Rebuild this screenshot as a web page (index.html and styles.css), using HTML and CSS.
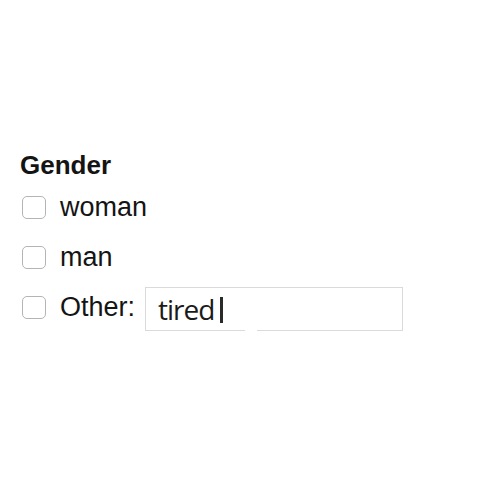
FILE: index.html
```html
<!DOCTYPE html>
<html lang="en">
  <head>
    <meta charset="UTF-8" />
    <title>Gender</title>
    <link rel="stylesheet" href="styles.css">
  </head>
  <body>
    <form class="form">
      <h2 class="legend">Gender</h2>
      <label class="row">
        <input type="checkbox" class="check" />
        <span>woman</span>
      </label>
      <label class="row">
        <input type="checkbox" class="check" />
        <span>man</span>
      </label>
      <div class="row">
        <input type="checkbox" class="check" id="other" />
        <label for="other">Other:</label>
        <div class="field">tired<span class="caret"></span></div>
      </div>
    </form>
  </body>
</html>
```

FILE: styles.css
```css
body {
  margin: 0;
  padding: 0;
  background: #fff;
  font-family: "Liberation Sans", Arial, sans-serif;
  color: #141414;
}

.form {
  padding: 150px 20px 0;
}

.legend {
  margin: 0 0 2px 0;
  font-size: 26px;
  line-height: 30px;
  font-weight: bold;
}

.row {
  display: flex;
  align-items: center;
  height: 50px;
  font-size: 27px;
}

.check {
  appearance: none;
  -webkit-appearance: none;
  width: 24px;
  height: 23px;
  margin: 0 14px 0 2px;
  border: 1.5px solid #b4b4b4;
  border-radius: 5px;
  background: #fff;
}

.field {
  position: relative;
  display: flex;
  align-items: center;
  width: 258px;
  height: 44px;
  margin: 4px 0 0 10px;
  padding-left: 12px;
  box-sizing: border-box;
  border: 1px solid #dadada;
  font-family: "Open Sans", sans-serif;
  font-size: 28px;
  letter-spacing: -1px;
  color: #1a1a1a;
}

.caret {
  display: inline-block;
  width: 3px;
  height: 26px;
  margin: 2px 0 0 6px;
  background: #2a2a2a;
}

.field::after {
  content: "";
  position: absolute;
  left: 99px;
  bottom: -1px;
  width: 12px;
  height: 2px;
  background: #fff;
}
```
